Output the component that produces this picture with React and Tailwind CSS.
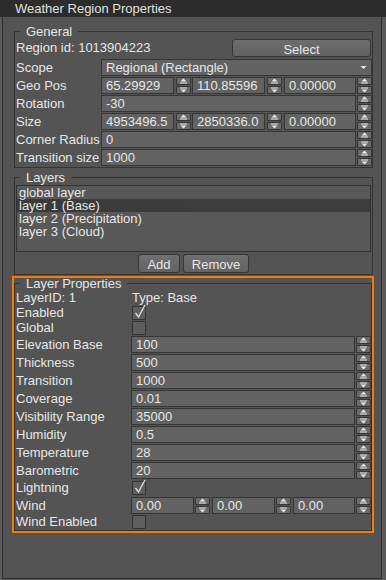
import React from "react";

const SpinBtn = ({ up }) => (
  <div className="flex-1 flex items-center justify-center border border-[#363636] bg-[#6a6a6a] rounded-[1px]">
    <svg width="9" height="6" viewBox="0 0 9 6">
      {up ? (
        <>
          <path d="M1.5 3.5 L4.5 0.5 L7.5 3.5 Z" fill="#e8e8e8" />
          <rect x="1" y="4.5" width="7" height="1" fill="#e8e8e8" />
        </>
      ) : (
        <>
          <rect x="1" y="0.5" width="7" height="1" fill="#e8e8e8" />
          <path d="M1.5 2.5 L4.5 5.5 L7.5 2.5 Z" fill="#e8e8e8" />
        </>
      )}
    </svg>
  </div>
);

const Spin = () => (
  <div className="w-[15px] h-[17px] flex flex-col gap-[1px] shrink-0">
    <SpinBtn up />
    <SpinBtn />
  </div>
);

const Field = ({ value, className = "flex-1" }) => (
  <div
    className={`${className} h-[17px] border border-[#363636] bg-[#626262] pl-[4px] leading-[15px] text-[#e6e6e6] overflow-hidden whitespace-nowrap`}
  >
    {value}
  </div>
);

const Check = ({ checked }) => (
  <div className="w-[14px] h-[14px] border border-[#333] bg-[#5e5e5e] rounded-[1px] relative">
    {checked && (
      <svg
        className="absolute left-[1px] top-[-3px] overflow-visible"
        width="12"
        height="15"
        viewBox="0 0 12 15"
      >
        <path
          d="M1.5 9 L4.5 13 L11 1"
          fill="none"
          stroke="#dcdcdc"
          strokeWidth="1.4"
        />
      </svg>
    )}
  </div>
);

// single value row with spinner
const NumRow = ({ label, value, labelW }) => (
  <div className="flex h-[17px] mt-[1px] first:mt-0">
    <div className={`${labelW} leading-[17px] shrink-0 whitespace-nowrap`}>{label}</div>
    <div className="flex-1 flex gap-[1px]">
      <Field value={value} />
      <Spin />
    </div>
  </div>
);

const CheckRow = ({ label, checked, h }) => (
  <div className={`flex items-center ${h}`}>
    <div className="w-[116px] shrink-0">{label}</div>
    <Check checked={checked} />
  </div>
);

const App = () => {
  return (
    <div className="w-[386px] h-[580px] bg-[#5a5a5a] font-['Liberation_Sans',Arial,sans-serif] text-[13px] text-[#e6e6e6] overflow-hidden">
      {/* Title bar */}
      <div className="h-[17px] bg-[#2c2c2c] pl-[15px] leading-[17px] text-[#e0e0e0]">
        Weather Region Properties
      </div>

      <div className="ml-[2px] w-[380px] h-[562px] border-l border-r border-b border-[#2e2e2e] bg-[#545454] pt-[7px]">
        {/* General */}
        <fieldset className="ml-[11px] w-[359px] border border-[#343434] pl-[1px] pb-[1px]">
          <legend className="ml-[4px] px-[6px] leading-[15px]">General</legend>
          <div className="flex h-[18px] items-center">
            <div className="flex-1">Region id: 1013904223</div>
            <button className="w-[139px] h-[18px] mr-[1px] border border-[#363636] rounded-[3px] bg-gradient-to-b from-[#6e6e6e] to-[#626262] text-[#e6e6e6]">
              Select
            </button>
          </div>
          <div className="flex h-[17px] mt-[2px]">
            <div className="w-[85px] leading-[17px]">Scope</div>
            <div className="flex-1 flex items-center justify-between border border-[#363636] bg-[#626262] pl-[4px] pr-[4px]">
              <span>Regional (Rectangle)</span>
              <svg width="7" height="5" viewBox="0 0 7 5">
                <path d="M0.5 1 L3.5 4 L6.5 1 Z" fill="#e6e6e6" />
              </svg>
            </div>
          </div>
          <div className="flex h-[17px] mt-[1px]">
            <div className="w-[85px] leading-[17px]">Geo Pos</div>
            <div className="flex-1 flex">
              <Field value="65.29929" className="w-[73px]" />
              <div className="ml-[2px]"><Spin /></div>
              <Field value="110.85596" className="w-[73px] ml-[1px]" />
              <div className="ml-[2px]"><Spin /></div>
              <Field value="0.00000" className="flex-1 ml-[2px]" />
              <div className="ml-[1px]"><Spin /></div>
            </div>
          </div>
          <NumRow label="Rotation" value="-30" labelW="w-[85px]" />
          <div className="flex h-[17px] mt-[1px]">
            <div className="w-[85px] leading-[17px]">Size</div>
            <div className="flex-1 flex">
              <Field value="4953496.5" className="w-[73px]" />
              <div className="ml-[2px]"><Spin /></div>
              <Field value="2850336.0" className="w-[73px] ml-[1px]" />
              <div className="ml-[2px]"><Spin /></div>
              <Field value="0.00000" className="flex-1 ml-[2px]" />
              <div className="ml-[1px]"><Spin /></div>
            </div>
          </div>
          <NumRow label="Corner Radius" value="0" labelW="w-[85px]" />
          <NumRow label="Transition size" value="1000" labelW="w-[85px]" />
        </fieldset>

        {/* Layers */}
        <fieldset className="ml-[11px] mt-[2px] w-[359px] border border-[#343434] pl-[1px] pb-[1px]">
          <legend className="ml-[4px] px-[6px] leading-[15px]">Layers</legend>
          <div className="h-[67px] mr-[1px] border border-[#333] bg-[#585858] leading-[13px]">
            <div className="pl-[2px]">global layer</div>
            <div className="pl-[2px] bg-gradient-to-r from-[#3a3a3a] to-[#3e3e3e]">layer 1 (Base)</div>
            <div className="pl-[2px]">layer 2 (Precipitation)</div>
            <div className="pl-[2px]">layer 3 (Cloud)</div>
          </div>
          <div className="flex gap-[3px] mt-[2px] pl-[122px]">
            <button className="w-[42px] h-[19px] border border-[#363636] rounded-[3px] bg-gradient-to-b from-[#707070] to-[#626262] text-[#e6e6e6]">
              Add
            </button>
            <button className="w-[66px] h-[19px] border border-[#363636] rounded-[3px] bg-gradient-to-b from-[#707070] to-[#626262] text-[#e6e6e6]">
              Remove
            </button>
          </div>
        </fieldset>

        {/* Layer Properties */}
        <div className="ml-[9px] mt-[1px] w-[362px] border-2 border-[#f07d0a]">
          <fieldset className="border border-[#343434] pl-[1px]">
            <legend className="ml-[4px] px-[6px] leading-[11px]">Layer Properties</legend>
            <div className="flex h-[15px] items-center mt-[1px]">
              <div className="w-[116px]">LayerID: 1</div>
              <div>Type: Base</div>
            </div>
            <CheckRow label="Enabled" checked h="h-[15px]" />
            <CheckRow label="Global" h="h-[16px]" />
            <div>
              <NumRow label="Elevation Base" value="100" labelW="w-[115px]" />
              <NumRow label="Thickness" value="500" labelW="w-[115px]" />
              <NumRow label="Transition" value="1000" labelW="w-[115px]" />
              <NumRow label="Coverage" value="0.01" labelW="w-[115px]" />
              <NumRow label="Visibility Range" value="35000" labelW="w-[115px]" />
              <NumRow label="Humidity" value="0.5" labelW="w-[115px]" />
              <NumRow label="Temperature" value="28" labelW="w-[115px]" />
              <NumRow label="Barometric" value="20" labelW="w-[115px]" />
            </div>
            <div className="mt-[1px]">
              <CheckRow label="Lightning" checked h="h-[16px]" />
            </div>
            <div className="flex h-[17px] mt-[1px]">
              <div className="w-[115px] leading-[17px]">Wind</div>
              <div className="flex-1 flex">
                <Field value="0.00" className="w-[63px]" />
                <div className="ml-[1px]"><Spin /></div>
                <Field value="0.00" className="w-[63px] ml-[2px]" />
                <div className="ml-[1px]"><Spin /></div>
                <Field value="0.00" className="flex-1 ml-[2px]" />
                <div className="ml-[1px]"><Spin /></div>
              </div>
            </div>
            <CheckRow label="Wind Enabled" h="h-[16px]" />
          </fieldset>
        </div>
      </div>
    </div>
  );
};

export default App;
